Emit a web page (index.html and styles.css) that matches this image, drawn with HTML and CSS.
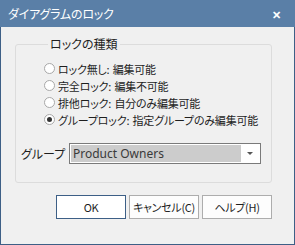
FILE: index.html
```html
<!DOCTYPE html>
<html lang="ja">
<head>
    <meta charset="UTF-8">
    <title>ダイアグラムのロック</title>
    <link rel="stylesheet" href="styles.css">
</head>
<body>
<div class="window">
    <div class="titlebar">
        <span class="title">ダイアグラムのロック</span>
        <span class="close">✕</span>
    </div>

    <div class="content">
        <fieldset class="group">
            <legend>ロックの種類</legend>
            <label class="radio"><span class="dot"></span>ロック無し: 編集可能</label>
            <label class="radio"><span class="dot"></span>完全ロック: 編集不可能</label>
            <label class="radio"><span class="dot"></span>排他ロック: 自分のみ編集可能</label>
            <label class="radio checked"><span class="dot"></span>グループロック: 指定グループのみ編集可能</label>

            <div class="field">
                <span class="field-label">グループ</span>
                <div class="select">
                    <span class="select-value">Product Owners</span>
                    <span class="select-arrow"></span>
                </div>
            </div>
        </fieldset>

        <div class="buttons">
            <button class="btn default">OK</button>
            <button class="btn">キャンセル(C)</button>
            <button class="btn">ヘルプ(H)</button>
        </div>
    </div>
</div>
</body>
</html>
```

FILE: styles.css
```css
body {
    margin: 0;
    font-family: "Noto Sans CJK JP", "Noto Sans", sans-serif;
    font-size: 12px;
    color: #1e1e1e;
    background: #f0f0f0;
}

.window {
    width: 295px;
    height: 245px;
    box-sizing: border-box;
    border: 1px solid #3d5f86;
    border-top: none;
    background: #f0f0f0;
    font-feature-settings: "palt";
    white-space: nowrap;
}

/* タイトルバー */
.titlebar {
    height: 27px;
    margin: 0 -1px;
    background: #5a7fa7;
    color: #fff;
    display: flex;
    align-items: center;
    justify-content: space-between;
    padding: 0 14px 0 8px;
}

.title {
    font-size: 12px;
    letter-spacing: -0.2px;
}

.close {
    font-size: 11px;
    font-weight: bold;
}

.content {
    padding: 9px 22px 0 14px;
}

/* グループボックス */
.group {
    margin: 0;
    min-width: 0;
    padding: 8px 0 18px 28px;
    border: 1px solid #dcdcdc;
    border-radius: 3px;
}

.group legend {
    margin-left: 4px;
    padding: 0 2px;
    line-height: 16px;
}

.radio {
    display: flex;
    align-items: center;
    height: 17px;
    gap: 3px;
    font-size: 11px;
    letter-spacing: -0.2px;
    word-spacing: 1px;
}

.dot {
    flex: none;
    width: 9px;
    height: 9px;
    border: 1px solid #a8a8a8;
    border-radius: 50%;
    background: #fff;
    position: relative;
}

.radio.checked .dot::after {
    content: '';
    position: absolute;
    left: 2px;
    top: 2px;
    width: 5px;
    height: 5px;
    border-radius: 50%;
    background: #333;
}

.field {
    display: flex;
    align-items: center;
    margin: 15px 0 0 -23px;
    gap: 17px;
}

.field-label {
    flex: none;
    width: 31px;
}

.select {
    flex: none;
    width: 192px;
    height: 21px;
    box-sizing: border-box;
    border: 1px solid #7a7a7a;
    background: #fff;
    padding: 1px;
    display: flex;
}

.select-value {
    flex: 1;
    background: #cccccc;
    color: #3a3a3a;
    padding-left: 2px;
    line-height: 17px;
    font-family: "Noto Sans", sans-serif;
}

.select-arrow {
    width: 18px;
    position: relative;
}

.select-arrow::after {
    content: '';
    position: absolute;
    left: 6px;
    top: 7px;
    border-left: 3px solid transparent;
    border-right: 3px solid transparent;
    border-top: 3px solid #555;
}

/* ボタン */
.buttons {
    display: flex;
    justify-content: flex-end;
    gap: 3px;
    margin-top: 12px;
}

.btn {
    width: 70px;
    height: 24px;
    border: 1px solid #adadad;
    background: #fdfdfd;
    font-family: "Noto Sans CJK JP", sans-serif;
    font-size: 11px;
    font-feature-settings: "palt";
    letter-spacing: -0.3px;
    color: #1e1e1e;
    padding: 0;
}

.btn.default {
    border-color: #3d5f86;
    background: #fff;
}
```
